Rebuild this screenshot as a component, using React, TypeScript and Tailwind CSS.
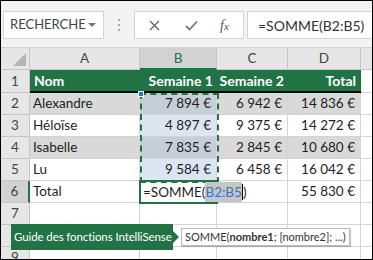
import { ReactNode } from "react";

const font = { fontFamily: 'Lato, "Liberation Sans", sans-serif' };

const rows = [
  { n: 2, nom: "Alexandre", s1: "7 894 €", s2: "6 942 €", total: "14 836 €", band: true },
  { n: 3, nom: "Héloïse", s1: "4 897 €", s2: "9 375 €", total: "14 272 €", band: false },
  { n: 4, nom: "Isabelle", s1: "7 835 €", s2: "2 845 €", total: "10 680 €", band: true },
  { n: 5, nom: "Lu", s1: "9 584 €", s2: "6 458 €", total: "16 042 €", band: false },
];

const Cell = ({ className = "", children }: { className?: string; children?: ReactNode }) => (
  <div className={`h-[22px] border-r border-b border-[#d4d4d4] flex items-center whitespace-nowrap text-[13.5px] text-[#1e1e1e] ${className}`}>
    {children}
  </div>
);

const RowHead = ({ n, active }: { n: number; active?: boolean }) => (
  <div
    className={`h-[22px] border-b border-[#c6c6c6] flex items-center justify-center text-[13.5px] text-[#444] ${
      active ? "bg-[#d2d2d2] border-r-2 border-r-[#217346]" : "bg-[#e6e6e6] border-r"
    }`}
  >
    {n}
  </div>
);

const App = () => {
  return (
    <div style={font} className="w-[373px] h-[260px] border border-black bg-white overflow-hidden relative">
      {/* Barre de formule */}
      <div className="h-[46px] bg-[#f3f3f3] flex items-start pt-[10px] pl-[2px]">
        <div className="w-[101px] h-[28px] bg-white border border-[#d4d4d4] flex items-center justify-between pl-[6px] pr-[7px]">
          <span className="text-[13px] text-[#444]">RECHERCHE</span>
          <span className="w-0 h-0 border-l-[4px] border-r-[4px] border-t-[4px] border-l-transparent border-r-transparent border-t-[#777]" />
        </div>
        <div className="w-[30px] h-[28px] flex flex-col items-center justify-center gap-[3px]">
          <span className="w-[2px] h-[2px] bg-[#aaa]" />
          <span className="w-[2px] h-[2px] bg-[#aaa]" />
          <span className="w-[2px] h-[2px] bg-[#aaa]" />
        </div>
        <div className="w-[110px] h-[28px] bg-white border border-[#d4d4d4] flex items-center text-[#666]">
          <svg width="11" height="11" viewBox="0 0 11 11" className="ml-[14px]">
            <path d="M1 1L10 10M10 1L1 10" stroke="#666" strokeWidth="1.4" />
          </svg>
          <svg width="13" height="11" viewBox="0 0 13 11" className="ml-[25px]">
            <path d="M1 6L4.5 9.5L12 1.5" stroke="#777" strokeWidth="1.8" fill="none" />
          </svg>
          <span className="ml-[22px] italic text-[14px] text-[#555]" style={{ fontFamily: '"Liberation Serif", serif' }}>
            f<span className="text-[11px]">x</span>
          </span>
        </div>
        <div className="ml-[3px] flex-1 h-[28px] bg-white border border-[#d4d4d4] border-r-0 flex items-center pl-[10px] text-[14px] text-[#333]">
          =SOMME(B2:B5)
        </div>
      </div>

      {/* Feuille */}
      <div className="grid grid-cols-[29px_110px_77px_71px_73px_1fr] border-t border-[#d4d4d4]">
        {/* En-têtes de colonnes */}
        <div className="h-[22px] bg-[#e6e6e6] border-r border-b border-[#c6c6c6] flex items-end justify-end p-[3px]">
          <svg width="13" height="13" viewBox="0 0 13 13">
            <path d="M13 0L13 13L0 13Z" fill="#b4b4b4" />
          </svg>
        </div>
        <div className="h-[22px] bg-[#e6e6e6] border-r border-b border-[#c6c6c6] flex items-center justify-center text-[13.5px] text-[#444]">A</div>
        <div className="h-[22px] bg-[#d2d2d2] border-r border-[#c6c6c6] border-b-2 border-b-[#217346] flex items-center justify-center text-[13.5px] text-[#217346]">B</div>
        <div className="h-[22px] bg-[#e6e6e6] border-r border-b border-[#c6c6c6] flex items-center justify-center text-[13.5px] text-[#444]">C</div>
        <div className="h-[22px] bg-[#e6e6e6] border-r border-b border-[#c6c6c6] flex items-center justify-center text-[13.5px] text-[#444]">D</div>
        <div className="h-[22px] bg-[#e6e6e6] border-b border-[#c6c6c6]" />

        {/* Ligne 1 : en-tête du tableau */}
        <div className="h-[23px] bg-[#e6e6e6] border-r border-b border-[#c6c6c6] flex items-center justify-center text-[13.5px] text-[#444]">1</div>
        <div className="h-[23px] bg-[#217346] border-b-2 border-black flex items-center pl-[4px] text-[14px] font-bold text-white">Nom</div>
        <div className="h-[23px] bg-[#217346] border-b-2 border-black flex items-center justify-end pr-[4px] text-[14px] font-bold text-white whitespace-nowrap">Semaine 1</div>
        <div className="h-[23px] bg-[#217346] border-b-2 border-black flex items-center justify-end pr-[4px] text-[14px] font-bold text-white whitespace-nowrap">Semaine 2</div>
        <div className="h-[23px] bg-[#217346] border-b-2 border-black flex items-center justify-end pr-[5px] text-[14px] font-bold text-white">Total</div>
        <div className="h-[23px] border-b border-[#d4d4d4]" />

        {rows.map((r) => (
          <Row key={r.n} {...r} />
        ))}

        {/* Ligne 6 */}
        <RowHead n={6} active />
        <Cell className="pl-[3px]">Total</Cell>
        <div className="h-[22px] border-b border-[#d4d4d4] relative overflow-visible">
          <div className="absolute left-[-1px] top-[-1px] w-[79px] h-[24px] border-2 border-[#217346] z-10" />
          <span className="absolute left-[3px] top-0 h-[22px] flex items-center text-[13.5px] text-[#1e1e1e] whitespace-nowrap z-20">
            =SOMME(
            <span className="bg-[#c6c6c6] text-[#3b72c4]">B2:B5</span>
            <span className="inline-block w-px h-[16px] bg-black" />)
          </span>
        </div>
        <Cell className="border-l-0" />
        <Cell className="justify-end pr-[5px]">55 830 €</Cell>
        <Cell className="border-r-0" />

        {[7, 8, 9].map((n) => (
          <Blank key={n} n={n} />
        ))}
      </div>

      {/* Sélection B2:B5 */}
      <div className="absolute left-[139px] top-[92px] w-[79px] h-[90px] border-2 border-dashed border-[#217346] pointer-events-none" />
      <div className="absolute left-[137px] top-[90px] w-[6px] h-[6px] bg-[#2f6fd0] border border-white" />

      {/* Info-bulles */}
      <div className="absolute left-[10px] top-[223px] h-[26px] w-[162px] bg-[#217346] flex items-center pl-[3px] text-[11.5px] tracking-[-0.1px] text-white whitespace-nowrap">
        Guide des fonctions IntelliSense
        <span className="absolute right-[-6px] top-[7px] w-0 h-0 border-t-[6px] border-b-[6px] border-l-[6px] border-t-transparent border-b-transparent border-l-[#217346]" />
      </div>
      <div className="absolute left-[180px] top-[227px] h-[18px] w-[169px] px-[3px] bg-white border border-[#bcbcbc] shadow-[1px_1px_1px_rgba(0,0,0,0.2)] flex items-center text-[11px] text-[#333] whitespace-nowrap">
        SOMME(<b>nombre1</b>; [nombre2]; ...)
      </div>
    </div>
  );
};

const Row = ({
  n,
  nom,
  s1,
  s2,
  total,
  band,
}: {
  n: number;
  nom: string;
  s1: string;
  s2: string;
  total: string;
  band: boolean;
}) => (
  <>
    <RowHead n={n} />
    <Cell className={`pl-[3px] ${band ? "bg-[#d9d9d9]" : ""}`}>{nom}</Cell>
    <Cell className={`justify-end pr-[5px] ${band ? "bg-[#c6ced8]" : "bg-[#dce6f2]"}`}>{s1}</Cell>
    <Cell className={`justify-end pr-[5px] ${band ? "bg-[#d9d9d9]" : ""}`}>{s2}</Cell>
    <Cell className={`justify-end pr-[5px] ${band ? "bg-[#d9d9d9]" : ""}`}>{total}</Cell>
    <Cell className="border-r-0" />
  </>
);

const Blank = ({ n }: { n: number }) => (
  <>
    <RowHead n={n} />
    <Cell />
    <Cell />
    <Cell />
    <Cell />
    <Cell className="border-r-0" />
  </>
);

export default App;
